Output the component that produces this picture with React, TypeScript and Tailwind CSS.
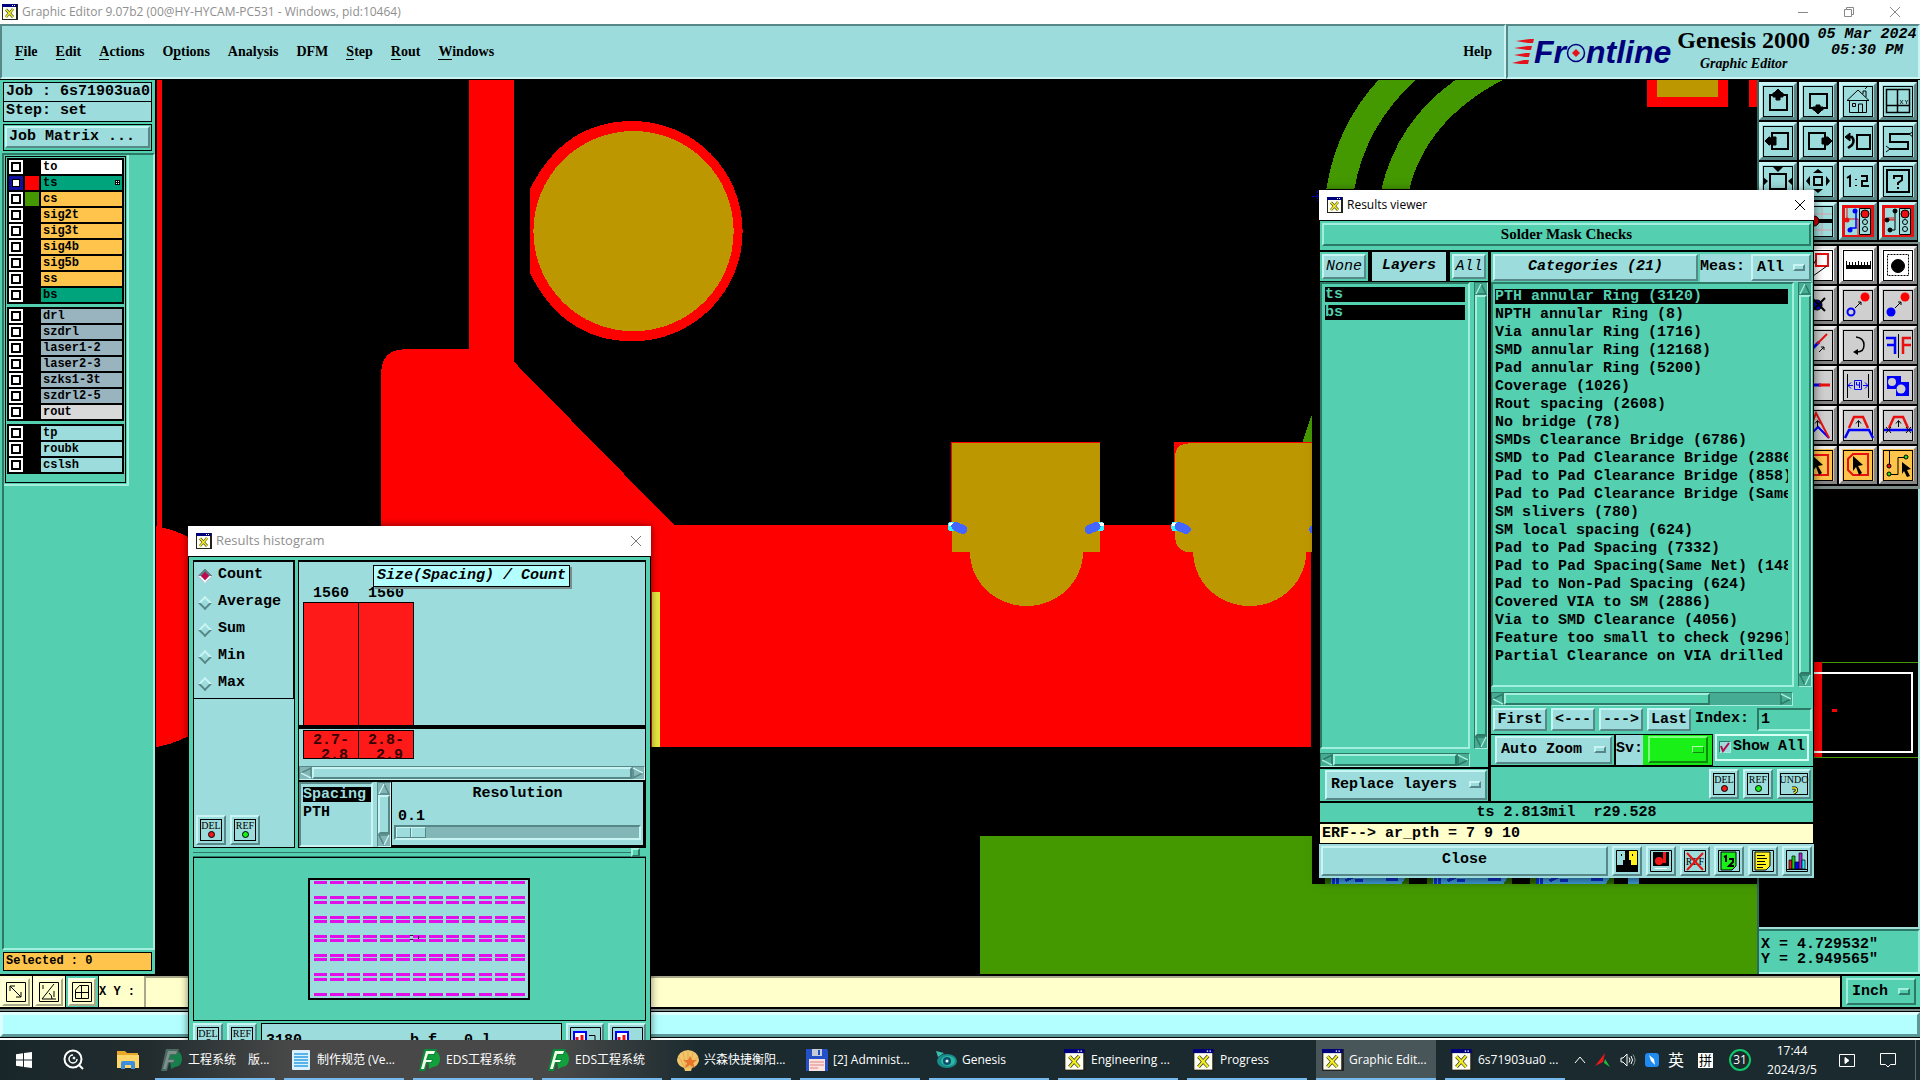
import type { ReactNode } from "react";
import clsx from "clsx";

const mono = "font-['Liberation_Mono',monospace] text-[15px] font-bold";
const raised = "border-2 border-t-[#c9f4f4] border-l-[#c9f4f4] border-r-[#578787] border-b-[#578787] bg-[#9cdcdc]";
const raisedGreen = "border-2 border-t-[#a2efdd] border-l-[#a2efdd] border-r-[#2c7a66] border-b-[#2c7a66] bg-[#54cfb0]";
const sunkGreen = "border-2 border-t-[#2c7a66] border-l-[#2c7a66] border-r-[#a2efdd] border-b-[#a2efdd] bg-[#54cfb0]";

const menus = [
  { label: "File", key: 0 },
  { label: "Edit", key: 0 },
  { label: "Actions", key: 0 },
  { label: "Options", key: 1 },
  { label: "Analysis", key: -1 },
  { label: "DFM", key: -1 },
  { label: "Step", key: 0 },
  { label: "Rout", key: 0 },
  { label: "Windows", key: 0 },
];

const layerGroups = [
  [
    { name: "to", bg: "bg-white", swatch: "bg-black" },
    { name: "ts", bg: "bg-[#00a47c]", swatch: "bg-[#ff0000]", active: true },
    { name: "cs", bg: "bg-[#ffc44c]", swatch: "bg-[#449900]" },
    { name: "sig2t", bg: "bg-[#ffc44c]", swatch: "bg-black" },
    { name: "sig3t", bg: "bg-[#ffc44c]", swatch: "bg-black" },
    { name: "sig4b", bg: "bg-[#ffc44c]", swatch: "bg-black" },
    { name: "sig5b", bg: "bg-[#ffc44c]", swatch: "bg-black" },
    { name: "ss", bg: "bg-[#ffc44c]", swatch: "bg-black" },
    { name: "bs", bg: "bg-[#00a47c]", swatch: "bg-black" },
  ],
  [
    { name: "drl", bg: "bg-[#9ab4bf]", swatch: "bg-black" },
    { name: "szdrl", bg: "bg-[#9ab4bf]", swatch: "bg-black" },
    { name: "laser1-2", bg: "bg-[#9ab4bf]", swatch: "bg-black" },
    { name: "laser2-3", bg: "bg-[#9ab4bf]", swatch: "bg-black" },
    { name: "szks1-3t", bg: "bg-[#9ab4bf]", swatch: "bg-black" },
    { name: "szdrl2-5", bg: "bg-[#9ab4bf]", swatch: "bg-black" },
    { name: "rout", bg: "bg-[#d9d9d9]", swatch: "bg-black" },
  ],
  [
    { name: "tp", bg: "bg-[#9cdcdc]", swatch: "bg-black" },
    { name: "roubk", bg: "bg-[#9cdcdc]", swatch: "bg-black" },
    { name: "cslsh", bg: "bg-[#9cdcdc]", swatch: "bg-black" },
  ],
];

const categories = [
  "PTH annular Ring (3120)",
  "NPTH annular Ring (8)",
  "Via annular Ring (1716)",
  "SMD annular Ring (12168)",
  "Pad annular Ring (5200)",
  "Coverage (1026)",
  "Rout spacing (2608)",
  "No bridge (78)",
  "SMDs Clearance Bridge (6786)",
  "SMD to Pad Clearance Bridge (2886)",
  "Pad to Pad Clearance Bridge (858)",
  "Pad to Pad Clearance Bridge (Same",
  "SM slivers (780)",
  "SM local spacing (624)",
  "Pad to Pad Spacing (7332)",
  "Pad to Pad Spacing(Same Net) (148",
  "Pad to Non-Pad Spacing (624)",
  "Covered VIA to SM (2886)",
  "Via to SMD Clearance (4056)",
  "Feature too small to check (9296)",
  "Partial Clearance on VIA drilled",
];

function XIcon({ className = "size-4" }: { className?: string }) {
  return (
    <svg viewBox="0 0 16 16" className={className} aria-hidden="true">
      <rect width="16" height="16" fill="#222" />
      <rect x="1" y="1" width="13" height="14" fill="#fffff0" />
      <rect width="15" height="3" fill="#00007c" />
      <path d="M10 1.500h1M12 1.500h1" stroke="#fff" />
      <path d="M4 5.500L11 13M11 5L4 13" stroke="#333" strokeWidth="2.600" />
      <path d="M4 5.500L11 13M11 5L4 13" stroke="#f2ee1c" strokeWidth="1.600" />
    </svg>
  );
}

function CloseGlyph({ color = "#000" }: { color?: string }) {
  return (
    <svg viewBox="0 0 12 12" className="size-3" stroke={color} fill="none" aria-hidden="true">
      <path d="M1 1l10 10M11 1L1 11" />
    </svg>
  );
}

function TitleBar() {
  return (
    <header className="flex h-6 shrink-0 items-center bg-white px-0.5 font-['Open_Sans',sans-serif] text-xs text-[#8f8f8f]">
      <XIcon />
      <h1 className="ml-1 flex-1">Graphic Editor 9.07b2 (00@HY-HYCAM-PC531 - Windows, pid:10464)</h1>
      <button aria-label="Minimize" className="flex w-[46px] justify-center">
        <svg viewBox="0 0 12 12" className="size-3" stroke="#888"><path d="M1 6.500h10" /></svg>
      </button>
      <button aria-label="Restore" className="flex w-[46px] justify-center">
        <svg viewBox="0 0 12 12" className="size-3" stroke="#888" fill="none">
          <path d="M1.500 3.500h7v7h-7zM3.500 3V1.500h7v7H9" />
        </svg>
      </button>
      <button aria-label="Close" className="flex w-[46px] justify-center"><CloseGlyph color="#888" /></button>
    </header>
  );
}

function MenuBar() {
  return (
    <div className="flex h-[56px] shrink-0 border-b border-black bg-[#9cdcdc] font-['Liberation_Serif',serif] text-sm font-bold">
      <nav className="flex flex-1 items-center gap-[18px] border-2 border-[#c9f4f4] border-t-[#578787] border-l-[#578787] pr-2 pl-[13px]">
        {menus.map((m) => (
          <button key={m.label} className="leading-4">
            {m.key < 0 ? (
              m.label
            ) : (
              <>
                {m.label.slice(0, m.key)}
                <span className="border-b border-black">{m.label[m.key]}</span>
                {m.label.slice(m.key + 1)}
              </>
            )}
          </button>
        ))}
        <button className="mr-1 ml-auto">Help</button>
      </nav>
      <div className="flex w-[414px] items-center border-2 border-[#c9f4f4] border-t-[#578787] border-l-[#578787] pl-1">
        <div className="flex items-center">
          <svg viewBox="0 0 22 28" className="h-7 w-[22px]" fill="#e3121c" aria-hidden="true">
            <path d="M4 3l14-2h4l-1 4h-5zM2 10l14-2h4l-1 4h-4zM2 17l12-2h4l-1 4h-4zM0 25l12-3h5l-1 4H8z" />
          </svg>
          <div className="flex items-baseline font-['Liberation_Sans',sans-serif] text-[32px] leading-8 font-bold text-[#00007c] italic">
            Fr
            <svg viewBox="0 0 20 20" className="size-5" role="img" aria-label="o">
              <circle cx="10" cy="10" r="8.500" fill="none" stroke="#00007c" strokeWidth="1.500" />
              <path d="M10 6l4 4-4 4-4-4z" fill="#e3121c" />
            </svg>
            ntline
          </div>
        </div>
        <div className="flex flex-1 flex-col items-center leading-none">
          <span className="text-2xl leading-6">Genesis 2000</span>
          <span className="text-sm leading-6 italic">Graphic Editor</span>
        </div>
        <div className={clsx(mono, "w-[102px] self-start pt-px text-center leading-4 italic")}>
          <div>05 Mar 2024</div>
          <div>05:30 PM</div>
        </div>
      </div>
    </div>
  );
}

function LayerPanel() {
  return (
    <aside className="flex w-[156px] shrink-0 flex-col border-r border-black bg-[#54cfb0] pt-0.5">
      <div className={clsx(mono, "mx-[3px] flex flex-col")}>
        <div className="h-5 border border-black bg-[#9cdcdc] pl-0.5 leading-[18px]">Job : 6s71903ua0</div>
        <div className="h-5 border border-t-0 border-black bg-[#9cdcdc] pl-0.5 leading-[18px]">Step: set</div>
        <div className="mt-0.5 border border-black p-px">
          <button className={clsx(raised, "h-[22px] w-full pl-0.5 text-left leading-[18px]")}>Job Matrix ...</button>
        </div>
      </div>
      <div className={clsx(sunkGreen, "mt-0.5 ml-0.5 flex-1")}>
        <div className="w-[125px] border-r-2 border-b-2 border-[#a2efdd] p-px">
          <div className="flex flex-col gap-[3px] border border-black px-px pt-px pb-2">
            {layerGroups.map((group) => (
              <div key={group[0].name} className="flex flex-col gap-0.5 bg-black p-0.5">
                {group.map((layer) => (
                  <label key={layer.name} className="flex h-3.5 gap-0.5">
                    <input
                      type="checkbox"
                      defaultChecked={layer.name === "ts"}
                      className="size-3.5 appearance-none bg-white shadow-[inset_0_0_0_2px_#fff,inset_0_0_0_4px_#000] checked:shadow-[inset_0_0_0_3px_#10109c,inset_0_0_0_4px_#000]"
                    />
                    <span className={clsx("w-3.5", layer.swatch)} />
                    <span className={clsx("flex flex-1 items-center justify-between px-0.5 font-['Liberation_Mono',monospace] text-xs leading-3 font-bold", layer.bg)}>
                      {layer.name}
                      {"active" in layer && (
                        <svg viewBox="0 0 5 5" className="size-[5px]">
                          <rect width="5" height="5" />
                          <path d="M1 1h1v1H1zM3 1h1v1H3zM1 3h1v1H1zM3 3h1v1H3z" fill="#fff" />
                        </svg>
                      )}
                    </span>
                  </label>
                ))}
              </div>
            ))}
          </div>
        </div>
      </div>
      <div className="mx-[3px] mt-0.5 mb-[3px] h-[19px] border border-black bg-[#ffc44c] pl-0.5 font-['Liberation_Mono',monospace] text-xs leading-[17px] font-bold">
        Selected : 0
      </div>
    </aside>
  );
}

function BoardCanvas() {
  return (
    <main className="min-w-0 flex-1 bg-black">
      <svg viewBox="156 80 1601 893" preserveAspectRatio="xMinYMin slice" className="h-full w-full" shapeRendering="crispEdges" role="img" aria-label="Board layout">
        <g fill="#ff0000">
          <path d="M157 80h5v556h-5z" />
          <circle cx="137" cy="636" r="112" />
          <path d="M469 80h45v282l160 163h636v221H381V373q0-24 24-24h64z" />
          <path d="M530 188v86q34 67 102 67a110 110 0 0 0 0-220q-68 0-102 67z" />
          <path d="M950 442h149v100h-149zM1173 442h138v90h-138z" />
          <path d="M1645 80h81v27h-81zM1747 80h8v27h-8z" />
        </g>
        <path d="M651 591h8v155h-8z" fill="#e8e840" />
        <g fill="#449900">
          <path d="M1377 80h37q-50 46-61 109h-28q10-63 52-109zM1454 80h47q-76 40-93 109h-28q16-68 74-109z" />
          <path d="M1311 413v29h-10z" />
          <path d="M979 835h332v48h444v91H979z" />
        </g>
        <g fill="#bc9700">
          <circle cx="633" cy="231" r="100" />
          <path d="M951 443h148v108h-17a56 54 0 0 1-113 0h-18z" />
          <path d="M1188 443h123v108h-6a56 54 0 0 1-113 0h-8q-10-4-10-14v-80q0-14 14-14z" />
          <path d="M1655 80h61v17h-61z" />
        </g>
        <g strokeWidth="8" strokeLinecap="round">
          <path d="M951 525v2M1099 525v2M1174 525v2" stroke="#30f4ff" />
          <path d="M950 524h1M1100 524h1M1173 524h1" stroke="#fff" strokeWidth="4" />
          <path d="M955 526l7 3M1095 526l-7 3M1178 526l7 3" stroke="#4466ff" strokeWidth="9" />
        </g>
        <path d="M1308 529a4 4 0 0 1 3-4v8a4 4 0 0 1-3-4z" fill="#4466ff" />
        <path d="M1311 196h10M1316 191v10" stroke="#0000ff" strokeDasharray="2 1" />
        {[1330, 1432, 1534].map((x) => (
          <g key={x} transform={`translate(${x} 874)`}>
            <path d="M-6 0h84v9H-6z" fill="#2f6d00" />
            <path d="M0 0h76l-6 9H0z" fill="#42a4e4" />
            <path d="M2 1v8M6 2v7M10 2h10M14 6l8-4M24 6h8M55 5h12M62 2h10" stroke="#1030d8" strokeWidth="3" />
          </g>
        ))}
        <path d="M1626 874h11v9h-11z" fill="#42a4e4" />
      </svg>
    </main>
  );
}

// All tool drawings share a 38x38 box; the frame at 4.5 is drawn by ToolButton.
const navTools: { name: string; art: ReactNode; alert?: boolean }[] = [
  { name: "Pan up", art: <><path d="M11 13h17v15H11z" fill="none" strokeWidth="2" /><path d="M19 7l4 4h1v4h-3v3h-4v-3h-3v-4h1z" /></> },
  { name: "Pan down", art: <><path d="M11 12h17v14H11z" fill="none" strokeWidth="2" /><path d="M19 32l4-4h1v-3h-3v-2h-4v2h-3v3h1z" /></> },
  { name: "Home", art: <path d="M10.500 18v12.500h17V18M8 18.500L19 8l11 10.500zM13.500 21.500h3v3h-3zM19.500 30v-8h4v8M24 12V9h3v6M26 7l2-2" fill="none" /> },
  { name: "Coordinates", art: <><path d="M7.500 7.500h23v23h-23zM18.500 8v22M8 23.500h22" fill="none" strokeWidth="1.500" /><path d="M21 18l3 4m0-4l-3 4M26 18l1.500 2 1.500-2M27.500 20v2" fill="none" strokeWidth="0.700" /></> },
  { name: "Pan left", art: <><path d="M13 11h16v16H13z" fill="none" strokeWidth="2" /><path d="M6 19l4-4h1v1h3v-1h3v8h-3v-1h-3v1h-1z" /></> },
  { name: "Pan right", art: <><path d="M10 11h16v16H10z" fill="none" strokeWidth="2" /><path d="M33 19l-4-4h-2v1h-4v6h4v1h2z" /></> },
  { name: "Previous view", art: <><path d="M18 13h13v14H18z" fill="none" strokeWidth="2" /><path d="M9 15h4q3 4 0 8l-4 3" fill="none" strokeWidth="2.500" /><path d="M6 15l5-4v8z" /></> },
  { name: "Serpentine", art: <><path d="M31 12H11v8h18v7H10" fill="none" strokeWidth="2" /><path d="M30 12l4-2M30 12l4 3M11 27l-4-3M11 27l-4 3" fill="none" /></> },
  { name: "Zoom in", art: <><path d="M11 12h16v15H11z" fill="none" strokeWidth="2" /><path d="M14 5h10l-5 5zM4 15v9l5-5zM34 15v9l-5-5zM14 34h10l-5-4z" stroke="none" /></> },
  { name: "Zoom out", art: <><path d="M15 15h8v8h-8z" fill="none" strokeWidth="2" /><path d="M14 11h10l-5-4zM11 14v10l-4-5zM27 14v10l4-5zM14 27h10l-5 4z" stroke="none" /></> },
  { name: "Scale", art: <path d="M8 16l3-2v11M17 17v1M17 23v1M22 14h6v5h-5v5h7" fill="none" strokeWidth="2" /> },
  { name: "Help", art: <><path d="M8 8h22v22H8z" fill="none" strokeWidth="2" /><path d="M15 17v-3h8v4l-4 3v2M19 25v2" fill="none" strokeWidth="2" /></> },
  { name: "Snap", art: <path d="M8 19h22M19 8v22" /> },
  { name: "Grid point", art: <><path d="M11 5v28M23 5v28M5 12h28M5 28h28" stroke="#dba0a8" /><path d="M19 19h14" strokeWidth="4" /><circle cx="15" cy="19" r="5" fill="#c00" /></> },
  {
    name: "Net control",
    alert: true,
    art: <><path d="M8 5v12h11v17" fill="none" stroke="#e81010" /><path d="M17 8v18h-6" fill="none" stroke="#0000ff" strokeWidth="1.500" /><circle cx="8" cy="18" r="2.500" fill="#e81010" stroke="none" /><circle cx="16" cy="9" r="2.500" fill="#0000ff" stroke="none" /><circle cx="11" cy="28" r="2.500" fill="#0000ff" stroke="none" /><path d="M20.500 6.500h11v26h-11z" fill="none" /><circle cx="26" cy="12" r="4" fill="#e81010" /><circle cx="26" cy="20" r="2.500" fill="none" /><circle cx="26" cy="27" r="2.500" fill="none" /></>,
  },
  {
    name: "Net trace",
    alert: true,
    art: <><path d="M16 9v19h-5" fill="none" /><path d="M10 18v-3m2 3v-3m2 3v-3M8 18h8" stroke="#e81010" fill="none" /><circle cx="8" cy="18" r="2" /><circle cx="16" cy="9" r="2" /><circle cx="11" cy="28" r="2" /><path d="M20.500 6.500h11v26h-11z" fill="none" /><circle cx="26" cy="12" r="4" fill="#e81010" /><circle cx="26" cy="20" r="2.500" fill="none" /><circle cx="26" cy="27" r="2.500" fill="none" /></>,
  },
];

const arrowCursor = "M14 10l10 9-5 1 4 7-3 2-3-8-3 4z";

const editTools: { name: string; art: ReactNode; tone: string }[] = [
  { name: "Select area", tone: "bg-white", art: <path d="M9 9h20v20H9z" fill="none" /> },
  { name: "Zoom area", tone: "bg-white", art: <><path d="M17 8h12v12H17z" fill="none" stroke="#e81010" strokeWidth="2" /><path d="M14 30l14-10M17 14L7 30" fill="none" /></> },
  { name: "Measure", tone: "bg-white", art: <><path d="M7.500 20v-5M10.500 20v-4M13.500 20v-4M16.500 20v-4M19.500 20v-5M22.500 20v-4M25.500 20v-4M28.500 20v-4M31.500 20v-5" /><path d="M7 19h25v4H7z" stroke="none" /></> },
  { name: "Highlight", tone: "bg-white", art: <><path d="M8.500 8.500h21v21h-21z" fill="none" strokeDasharray="2 1" /><circle cx="19" cy="20" r="6.500" /></> },
  { name: "Add feature", tone: "bg-[#cfcfcf]", art: <circle cx="19" cy="19" r="6" fill="#0000e8" /> },
  { name: "Delete", tone: "bg-[#cfcfcf]", art: <><circle cx="18" cy="19" r="5" fill="#0000c8" /><path d="M13 12l13 13M26 12L13 25" strokeWidth="2" /></> },
  { name: "Copy", tone: "bg-[#cfcfcf]", art: <><circle cx="12" cy="26" r="3.500" fill="none" stroke="#0000ff" strokeWidth="2" /><circle cx="26" cy="11" r="4.500" fill="#ff0000" stroke="none" /><path d="M16 22l6-6M19 16h3v3" fill="none" /></> },
  { name: "Move", tone: "bg-[#cfcfcf]", art: <><circle cx="12" cy="26" r="4.500" fill="#0000ff" stroke="none" /><circle cx="26" cy="11" r="4.500" fill="#ff0000" stroke="none" /><path d="M16 22l6-6M19 16h3v3" fill="none" /></> },
  { name: "Stretch", tone: "bg-[#cfcfcf]", art: <path d="M9 28L28 9" stroke="#0000ff" strokeWidth="3" /> },
  { name: "Rotate line", tone: "bg-[#cfcfcf]", art: <><path d="M14 22l6-6" stroke="#0000ff" strokeWidth="3" /><path d="M18 18l10-10" stroke="#e81010" strokeWidth="2" /><path d="M20 26l5-5M22 21h3v3" fill="none" /></> },
  { name: "Rotate", tone: "bg-[#cfcfcf]", art: <><path d="M17 11q8 1 8 8t-7 7" fill="none" strokeWidth="1.500" /><path d="M14 26l5-3v6z" stroke="none" /></> },
  { name: "Mirror", tone: "bg-[#cfcfcf]", art: <><path d="M7 12h9v16M16 19H8" fill="none" stroke="#0000ff" strokeWidth="2.500" /><path d="M32 12h-8v16M24 19h8" fill="none" stroke="#e81010" strokeWidth="2.500" /><path d="M19.500 8v24" /></> },
  { name: "Break", tone: "bg-[#cfcfcf]", art: <path d="M8 19h22" stroke="#0000ff" strokeWidth="3" /> },
  { name: "Extend", tone: "bg-[#cfcfcf]", art: <><path d="M10 19h12" stroke="#0000ff" strokeWidth="3" /><path d="M20 19h11" stroke="#e81010" strokeWidth="3" /></> },
  { name: "Resize", tone: "bg-[#cfcfcf]", art: <><path d="M8.500 8v24M29.500 8v24" /><path d="M15.500 14.500h7v9h-7zM17.500 16v3h3v3M20.500 16v6M9 19.500h5M9 19.500l3-3M9 19.500l3 3M29 19.500h-5M29 19.500l-3-3M29 19.500l-3 3" fill="none" stroke="#0000ff" /></> },
  { name: "Contour", tone: "bg-[#cfcfcf]", art: <><path d="M8 10h14v6h8v14H17v-7H8z" fill="#0000ff" stroke="none" /><circle cx="13" cy="16" r="4" fill="#cfcfcf" stroke="none" /><circle cx="22" cy="23" r="4.500" fill="#cfcfcf" stroke="none" /></> },
  { name: "Arc", tone: "bg-[#cfcfcf]", art: <path d="M8 30L19 9l11 21" fill="none" stroke="#0000ff" strokeWidth="2" /> },
  { name: "Peak", tone: "bg-[#cfcfcf]", art: <><path d="M10 30l9-9 11 11" fill="none" stroke="#0000ff" strokeWidth="2" /><path d="M10 26l7-19 13 25" fill="none" stroke="#e81010" strokeWidth="2" /><path d="M18.500 21v-6M16 17.500l2.500-3 2.500 3" fill="none" /></> },
  { name: "Trapezoid", tone: "bg-[#cfcfcf]", art: <><path d="M10 22l5-11h9l5 11" fill="none" stroke="#e81010" strokeWidth="2.500" /><path d="M6 32l4-8h20l4 8" fill="none" stroke="#0000ff" strokeWidth="2.500" /><path d="M19.500 21v-6M17 17.500l2.500-3 2.500 3" fill="none" /></> },
  { name: "Trapezoid flat", tone: "bg-[#cfcfcf]", art: <><path d="M10 22l5-11h9l5 11" fill="none" stroke="#e81010" strokeWidth="2.500" /><path d="M5 24h29" stroke="#0000ff" strokeWidth="2.500" /><path d="M19.500 21v-6M17 17.500l2.500-3 2.500 3M7 21l5 6M12 21l-5 6M27 21l5 6M32 21l-5 6" fill="none" /></> },
  { name: "Pick", tone: "bg-[#ffc44c]", art: <path d={arrowCursor} /> },
  { name: "Pick window", tone: "bg-[#ffc44c]", art: <><path d="M9 9h20v20H9z" fill="none" stroke="#e81010" strokeWidth="2" /><path d={arrowCursor} stroke="none" /></> },
  { name: "Pick polygon", tone: "bg-[#ffc44c]", art: <><path d="M14 8h15v21H14l-5-5V13z" fill="none" stroke="#e81010" strokeWidth="2" /><path d={arrowCursor} stroke="none" /></> },
  { name: "Pick net", tone: "bg-[#ffc44c]", art: <><path d="M10.500 5v14M10 28.500h9v-17h8" fill="none" /><circle cx="10" cy="20" r="2" fill="#e81010" /><circle cx="10" cy="28" r="2" fill="#18e818" /><circle cx="27" cy="11" r="2" fill="#18e818" /><path d="M23 16l9 7-4 1 3 6-3 1-3-6-2 3z" stroke="none" /></> },
];

function ToolButton({ name, art, tone, alert }: { name: string; art: ReactNode; tone: string; alert?: boolean }) {
  return (
    <button aria-label={name} title={name} className={clsx("h-[38px] w-[38px] border-[3px]", tone)}>
      <svg viewBox="3 3 32 32" className="size-8" stroke="#000" aria-hidden="true">
        <rect x="4.500" y="4.500" width="29" height="30" fill="none" stroke={alert ? "#e81010" : "#000"} strokeWidth={alert ? 3 : 1} />
        {art}
      </svg>
    </button>
  );
}

function ToolPanel() {
  return (
    <aside className="flex w-[163px] shrink-0 flex-col border-l-2 border-[#2c6a60] bg-black">
      <div className="grid grid-cols-[repeat(4,38px)] gap-0.5 border-r-2 border-[#a2dfd8] py-0.5">
        {navTools.map((t) => (
          <ToolButton key={t.name} {...t} tone="bg-[#9cdcdc] border-t-[#c9f4f4] border-l-[#c9f4f4] border-r-[#578787] border-b-[#578787]" />
        ))}
      </div>
      <div className="grid grid-cols-[repeat(4,38px)] gap-0.5 border-t-2 border-r-2 border-b-[3px] border-[#7c8a88] py-0.5">
        {editTools.map((t) => (
          <ToolButton key={t.name} {...t} tone={clsx("border-t-[#ececec] border-l-[#ececec] border-r-[#858585] border-b-[#858585]", t.tone)} />
        ))}
      </div>
      <div className="min-h-0 flex-1 border-r-2 border-b-2 border-[#a2dfd8]">
        <svg viewBox="1759 488 158 440" preserveAspectRatio="xMinYMin meet" className="h-full w-full" shapeRendering="crispEdges" aria-label="Board overview">
          <path d="M1759 662.500h160M1759 757.500h160" stroke="#449900" />
          <path d="M1759 662h63v95h-63z" fill="#ff0000" />
          <path d="M1780 673h133v79h-133" fill="none" stroke="#fff" strokeWidth="2" />
          <path d="M1832 709h5v3h-5z" fill="#ff0000" />
        </svg>
      </div>
      <div className={clsx(mono, "h-[45px] border-t-2 border-r-2 border-b-2 border-t-[#2c7a66] border-r-[#a2efdd] border-b-[#a2efdd] bg-[#54cfb0] pt-1.5 pl-0.5")}>
        <div className="leading-[15px]">X = 4.729532"</div>
        <div className="leading-[15px]">Y = 2.949565"</div>
      </div>
    </aside>
  );
}

const snapModes = [
  { name: "Relative", d: "M9 9l11 11M9 14V9h5M20 15v5h-5" },
  { name: "Polar", d: "M8 22l12-15M8 22h14M15 16q3 2 3 6M9 8v4M20 14v6" },
  { name: "Grid", d: "M8.500 13l4-4.500h9v13h-13zM14.500 8v14M8 15.500h14" },
];

function StatusBars() {
  return (
    <footer className="shrink-0 bg-white">
      <div className="flex h-[35px] border-y-2 border-black bg-[#ffffcc]">
        {snapModes.map((m) => (
          <div key={m.name} className={clsx("flex w-[33px] items-center justify-center border-r border-black", m.name === "Grid" && "bg-[#54cfb0]")}>
            <button aria-label={m.name} className="border-2 border-t-[#ffffec] border-l-[#ffffec] border-r-[#a8a88a] border-b-[#a8a88a] bg-[#ffffcc]">
              <svg viewBox="3 3 24 24" className="size-6" fill="none" stroke="#000" aria-hidden="true">
                <path d="M5.500 5.500h19v19h-19z" />
                <path d={m.d} />
              </svg>
            </button>
          </div>
        ))}
        <label htmlFor="xy" className="w-[45px] bg-[#ffffcc] font-['Liberation_Mono',monospace] text-xs leading-8 font-bold">X Y :</label>
        <input id="xy" className="min-w-0 flex-1 border-t-2 border-l-2 border-[#a8a88a] bg-[#ffffcc] px-1 outline-none" />
        <div className="border-l-2 border-black bg-[#54cfb0] px-1 py-0.5">
          <OptionMenu label="Units" value="Inch" className={clsx(raisedGreen, "h-[27px] w-[70px]")} marker={raisedGreen} />
        </div>
      </div>
      <div className="border-y-2 border-t-[#7f8c8c] border-b-white bg-black py-px">
        <div className="h-[25px] border-[3px] border-t-[#dcffff] border-l-[#dcffff] border-r-[#5d9696] border-b-[#5d9696] bg-[#b3ffff]" />
      </div>
    </footer>
  );
}

function OptionMenu({ label, value, className, marker = raised }: { label: string; value: string; className?: string; marker?: string }) {
  return (
    <span className={clsx("relative flex items-center", className)}>
      <select aria-label={label} className={clsx(mono, "w-full appearance-none bg-transparent pl-1 leading-[18px] outline-none")}>
        <option>{value}</option>
      </select>
      <span className={clsx("pointer-events-none absolute right-1 h-[7px] w-3 border", marker)} />
    </span>
  );
}

function Scrollbar({ vertical, green, className, size = "w-full" }: { vertical?: boolean; green?: boolean; className?: string; size?: string }) {
  const light = green ? "#a2efdd" : "#c9f4f4";
  const dark = green ? "#2c7a66" : "#578787";
  const arrow = (dir: "up" | "down" | "left" | "right") => {
    const turn = { up: "", right: "rotate-90", down: "rotate-180", left: "-rotate-90" }[dir];
    return (
      <svg viewBox="0 0 12 12" className={clsx("size-3 shrink-0", turn)} fill="none" aria-hidden="true">
        <path d="M6 1L1 11h10z" stroke={dark} strokeWidth="1.500" />
        <path d="M6 1L1 11" stroke={light} strokeWidth="1.500" />
      </svg>
    );
  };
  return (
    <div
      className={clsx(
        "flex border",
        vertical ? "w-[14px] flex-col" : "h-[14px]",
        green ? "border-t-[#2c7a66] border-l-[#2c7a66] border-r-[#a2efdd] border-b-[#a2efdd] bg-[#46ab93]" : "border-t-[#578787] border-l-[#578787] border-r-[#c9f4f4] border-b-[#c9f4f4] bg-[#83b7b7]",
        className,
      )}
    >
      {arrow(vertical ? "up" : "left")}
      <div className="flex min-h-0 min-w-0 flex-1">
        <div className={clsx(green ? raisedGreen : raised, vertical ? "h-full w-full" : size)} />
      </div>
      {arrow(vertical ? "down" : "right")}
    </div>
  );
}

function BadgeButton({ text, dot, wide }: { text: string; dot?: "red" | "lime"; wide?: boolean }) {
  return (
    <button className={clsx(raised, "flex h-[30px] items-center justify-center", wide ? "w-[34px]" : "w-[30px]")}>
      <span className={clsx("flex h-[22px] flex-col items-center border border-black font-['Liberation_Serif',serif] text-[10px] font-normal", wide ? "w-[28px]" : "w-[22px]")}>
        <span className="leading-[11px]">{text}</span>
        {dot ? (
          <span className={clsx("size-[7px] rounded-full border border-black", dot === "red" ? "bg-[#f01818]" : "bg-[#18f018]")} />
        ) : (
          <svg viewBox="0 0 9 9" className="size-[9px]" fill="none" aria-hidden="true">
            <path d="M2 3h3q2.500 1 1 3.500L4 8" stroke="#000" strokeWidth="3" />
            <path d="M2 3h3q2.500 1 1 3.500L4 8" stroke="#f4f020" strokeWidth="1.500" />
          </svg>
        )}
      </span>
    </button>
  );
}

const stats = ["Count", "Average", "Sum", "Min", "Max"];

const bins = [
  { from: "2.7-", to: "2.8", count: 1560 },
  { from: "2.8-", to: "2.9", count: 1560 },
];

function HistogramWindow() {
  return (
    <section className="absolute top-[526px] left-[188px] flex h-[540px] w-[463px] flex-col bg-[#54cfb0] shadow-[0_0_8px_rgba(0,0,0,0.5)]">
      <div className="flex h-[30px] shrink-0 items-center bg-white px-2 font-['Open_Sans',sans-serif] text-xs text-[#8f8f8f]">
        <XIcon />
        <h2 className="ml-1 flex-1 text-[13px]">Results histogram</h2>
        <button aria-label="Close histogram" className="mr-px"><CloseGlyph color="#777" /></button>
      </div>
      <div className="border border-black px-1 pt-[3px]">
        <div className={clsx(mono, "flex h-[288px] gap-[3px]")}>
          <div className="flex w-[102px] flex-col justify-between border border-black bg-[#9cdcdc]">
            <fieldset className="flex h-[138px] flex-col border-t border-r border-b border-black pl-1.5">
              {stats.map((s) => (
                <label key={s} className="flex h-[27px] items-center gap-2">
                  <input
                    type="radio"
                    name="stat"
                    defaultChecked={s === "Count"}
                    className="size-2.5 rotate-45 appearance-none border-2 border-t-[#c9f4f4] border-l-[#c9f4f4] border-r-[#578787] border-b-[#578787] checked:border-t-[#578787] checked:border-l-[#578787] checked:border-r-[#e8ffff] checked:border-b-[#e8ffff] checked:bg-[#c00850]"
                  />
                  {s}
                </label>
              ))}
            </fieldset>
            <div className="flex gap-1 p-0.5">
              <BadgeButton text="DEL" dot="red" />
              <BadgeButton text="REF" dot="lime" />
            </div>
          </div>
          <div className="flex flex-1 flex-col border border-t-2 border-black bg-[#9cdcdc]">
            <div className="relative flex h-[167px] items-end border-b-4 border-black pl-1">
              <div className="absolute top-[3px] left-[74px] border border-black bg-[#b3ffff] px-[3px] leading-5 italic shadow-[2px_2px_0_#7b8c8c]">
                Size(Spacing) / Count
              </div>
              {bins.map((b) => (
                <div key={b.from} className="-mr-px w-14 text-center">
                  <div className="leading-4">{b.count}</div>
                  <div className="h-[123px] border border-b-0 border-black bg-[#ff1a1a]" />
                </div>
              ))}
            </div>
            <div className="flex h-[37px] pt-px pl-1">
              {bins.map((b) => (
                <div key={b.from} className="-mr-px h-[29px] w-14 border border-black bg-[#ff1a1a] text-center leading-[15px] text-[#330000]">
                  <div className="pt-0.5">{b.from}</div>
                  <div className="pl-[17px] text-left">{b.to}</div>
                </div>
              ))}
            </div>
            <Scrollbar />
            <div className="flex min-h-0 flex-1 gap-1 border-t-2 border-black">
              <ul className="w-[74px] border-2 border-t-[#578787] border-l-[#578787] border-r-[#c9f4f4] border-b-[#c9f4f4] py-[3px] pl-0.5">
                <li className="mb-[3px] h-[15px] bg-black leading-[15px] text-[#9cdcdc]">Spacing</li>
                <li className="leading-[15px]">PTH</li>
              </ul>
              <div className="flex"><Scrollbar vertical /></div>
              <div className="-ml-1 flex flex-1 flex-col border-r-2 border-b-2 border-l border-black px-0.5">
                <label htmlFor="resolution" className="pt-0.5 text-center leading-5">Resolution</label>
                <output htmlFor="resolution" className="pt-[5px] pl-1 leading-4">0.1</output>
                <input
                  id="resolution"
                  type="range"
                  min="0"
                  max="10"
                  defaultValue="0"
                  className="h-[15px] w-full appearance-none border-2 border-t-[#578787] border-l-[#578787] border-r-[#c9f4f4] border-b-[#c9f4f4] bg-[#83b7b7] [&::-webkit-slider-thumb]:h-[11px] [&::-webkit-slider-thumb]:w-[30px] [&::-webkit-slider-thumb]:appearance-none [&::-webkit-slider-thumb]:border [&::-webkit-slider-thumb]:border-t-[#c9f4f4] [&::-webkit-slider-thumb]:border-l-[#c9f4f4] [&::-webkit-slider-thumb]:border-r-[#578787] [&::-webkit-slider-thumb]:border-b-[#578787] [&::-webkit-slider-thumb]:bg-[linear-gradient(90deg,#9cdcdc_46%,#578787_46%,#578787_50%,#c9f4f4_50%,#c9f4f4_54%,#9cdcdc_54%)]"
                />
              </div>
            </div>
          </div>
        </div>
        <div className="flex h-[9px] items-center justify-end">
          <div className="h-px flex-1 bg-[#2c7a66]" />
          <div className={clsx(raisedGreen, "mr-1.5 size-[9px] border")} />
        </div>
        <div className="flex h-[164px] items-center justify-center border border-black shadow-[0_-1px_0_#2c7a66]">
          <svg viewBox="0 0 222 122" className="mr-0.5 h-[122px] w-[222px]" shapeRendering="crispEdges" role="img" aria-label="Results map">
            <rect x="1" y="1" width="220" height="120" fill="#9cdcdc" stroke="#000" strokeWidth="2" />
            <path
              d="M6 4.500h211M6 19.500h211M6 24.500h211M6 39.500h211M6 43.500h211M6 58.500h211M6 62.500h211M6 77.500h211M6 81.500h211M6 96.500h211M6 101.500h211M6 116.500h211"
              stroke="#e010e8"
              strokeWidth="3"
              strokeDasharray="13.400 3.050"
            />
            <path d="M102 57h3M102 61h3M110 58v3" stroke="#222" fill="none" />
          </svg>
        </div>
        <div className={clsx(mono, "flex gap-1 pt-0.5")}>
          <BadgeButton text="DEL" dot="red" />
          <BadgeButton text="REF" dot="lime" />
          <div className="h-8 flex-1 border border-black bg-[#9cdcdc] pt-2 pl-1 leading-[18px] whitespace-pre">3180            b f   0 l</div>
          {["Copy window", "Print window"].map((name) => (
            <button key={name} aria-label={name} className={clsx(raised, "flex h-[30px] w-[38px] justify-center")}>
              <svg viewBox="0 0 31 24" className="mt-0.5 h-6 w-[31px]" fill="none">
                <path d="M.5.500h30v23H.5z" stroke="#000" />
                <path d="M4 5h12v15H4z" fill="#fff" stroke="#0000ff" strokeWidth="2" />
                <path d="M7 10v8M12 8v10M7 16h6" stroke="#e81010" strokeWidth="3" />
                {name === "Copy window" && <path d="M19 8.500h6V18" stroke="#000" />}
              </svg>
            </button>
          ))}
        </div>
      </div>
    </section>
  );
}

const viewerTools: { name: string; art: ReactNode }[] = [
  { name: "Compare", art: <><path d="M0 0h11v15H0z" fill="#9cdcdc" /><path d="M11 0h11v15H11z" fill="#fff020" /><path d="M9 0h4v10h2v5h7v7H0v-7h7v-5h2z" fill="#000" /><path d="M5 4h1v2H5zM16 4h1v2h-1z" fill="#000" /><path d="M.5.5h21v21H.5z" fill="none" stroke="#000" /></> },
  { name: "Snapshot", art: <><path d="M.5.5h21v21H.5z" fill="#9cdcdc" stroke="#000" /><path d="M3 2h16v14H3z" fill="#000" /><circle cx="9" cy="11" r="4" fill="#f01818" /><path d="M13 2h3v11h-3z" fill="#f01818" /><path d="M5 18.500h12" stroke="#fff" /></> },
  { name: "Hide references", art: <><path d="M.5.5h21v21H.5z" fill="#9cdcdc" stroke="#000" /><text x="11" y="15" fontSize="10" textAnchor="middle" fontFamily="Liberation Serif, serif" fontWeight="400">REF</text><path d="M3 3l16 17M19 3L3 20" stroke="#e81010" strokeWidth="2" /></> },
  { name: "Numbered list", art: <><path d="M.5.5h21v21H.5z" fill="#9cdcdc" stroke="#000" /><path d="M3 2h15v14l-4 4H3z" fill="#18f018" stroke="#000" /><path d="M6 7l2-1v6M11 9h4v3l-4 4h5" fill="none" stroke="#000" strokeWidth="2" /></> },
  { name: "Report", art: <><path d="M.5.5h21v21H.5z" fill="#9cdcdc" stroke="#000" /><path d="M3 2h15v14l-4 4H3z" fill="#fff020" stroke="#000" /><path d="M5 5.500h8M5 8.500h10M5 11.500h8M5 14.500h9M5 17.500h6" stroke="#000" /></> },
  { name: "Histogram", art: <><path d="M.5.5h21v21H.5z" fill="#9cdcdc" stroke="#000" /><g stroke="#000" strokeWidth="0.700"><path d="M3 10h3v9H3z" fill="#f01818" /><path d="M6 6h3v13H6z" fill="#18d018" /><path d="M9 12h4v7H9z" fill="#0000ff" /><path d="M13 3h3v16h-3z" fill="#b020d0" /><path d="M16 10h3v9h-3z" fill="#20e8ff" /></g><path d="M1 19.500h20" stroke="#000" /></> },
];

function ResultsWindow() {
  return (
    <section className={clsx(mono, "absolute top-[190px] right-[106px] flex w-[495px] flex-col bg-black px-px shadow-[0_2px_10px_rgba(0,0,0,0.6)]")}>
      <div className="-mx-px flex h-[30px] items-center bg-white px-2 font-['Open_Sans',sans-serif] text-xs font-normal">
        <XIcon />
        <h2 className="ml-1 flex-1">Results viewer</h2>
        <button aria-label="Close viewer"><CloseGlyph /></button>
      </div>
      <div className="mt-px bg-[#54cfb0] p-0.5">
        <button className={clsx(raisedGreen, "h-[23px] w-full font-['Liberation_Serif',serif] text-[15px] leading-[19px]")}>Solder Mask Checks</button>
      </div>
      <div className="mt-0.5 flex h-[549px] gap-[3px]">
        <div className="flex w-[168px] flex-col">
          <div className="flex h-[29px] gap-1 italic">
            <div className="w-[48px] bg-[#54cfb0] p-0.5"><button className={clsx(raised, "h-[25px] w-full font-normal italic")}>None</button></div>
            <div className="flex flex-1 items-center justify-center bg-[#9cdcdc]">Layers</div>
            <div className="w-[38px] bg-[#54cfb0] p-0.5"><button className={clsx(raised, "h-[25px] w-full font-normal italic")}>All</button></div>
          </div>
          <div className="mt-px flex flex-1 flex-col bg-[#54cfb0]">
            <div className="flex flex-1 gap-1">
              <ul className={clsx(sunkGreen, "flex flex-1 flex-col gap-[3px] p-[3px]")}>
                <li className="h-[15px] bg-black leading-[15px] text-[#54cfb0]">ts</li>
                <li className="h-[15px] bg-black leading-[15px] text-[#54cfb0]">bs</li>
              </ul>
              <Scrollbar vertical green />
            </div>
            <div className="mt-1 mr-[18px]"><Scrollbar green /></div>
          </div>
          <div className="mt-0.5 bg-[#54cfb0] py-px pr-px pl-[5px]">
            <OptionMenu label="Layer display" value="Replace layers" className={clsx(raised, "h-[30px] w-full")} />
          </div>
        </div>
        <div className="flex min-w-0 flex-1 flex-col bg-[#54cfb0]">
          <div className="flex h-[30px] items-center px-0.5 pt-0.5">
            <button className={clsx(raised, "h-[27px] flex-1 italic")}>Categories (21)</button>
            <div className="ml-0.5 flex h-[28px] items-center bg-[#9cdcdc]">
              <span className="w-[51px]">Meas:</span>
              <OptionMenu label="Measurement" value="All" className={clsx(raised, "h-[27px] w-[60px]")} />
            </div>
          </div>
          <div className="flex h-[405px] gap-1 pr-px">
            <ul className={clsx(sunkGreen, "min-w-0 flex-1 overflow-hidden pt-[5px] pr-1 pl-0.5")}>
              {categories.map((c, i) => (
                <li key={c} className={clsx("mb-[3px] h-[15px] overflow-x-clip leading-[15px] whitespace-nowrap", i === 0 && "bg-black text-[#54cfb0]")}>
                  {c}
                </li>
              ))}
            </ul>
            <Scrollbar vertical green />
          </div>
          <div className="mt-[5px] mr-5"><Scrollbar green size="w-[206px]" /></div>
          <div className="flex h-7 items-center gap-1 pr-px pl-0.5">
            <button className={clsx(raised, "h-[23px] w-[54px] leading-[19px]")}>First</button>
            <button className={clsx(raised, "h-[23px] w-11 leading-[19px]")}>&lt;---</button>
            <button className={clsx(raised, "h-[23px] w-11 leading-[19px]")}>---&gt;</button>
            <button className={clsx(raised, "h-[23px] w-11 leading-[19px]")}>Last</button>
            <label htmlFor="index" className="w-[58px]">Index:</label>
            <input id="index" defaultValue="1" className={clsx(sunkGreen, "h-[23px] min-w-0 flex-1 pl-0.5 outline-none")} />
          </div>
          <div className="flex h-8 items-center">
            <div className="flex h-8 items-center border-y border-r-2 border-black pr-0.5 pl-1">
              <OptionMenu label="Zoom mode" value="Auto Zoom" className={clsx(raised, "h-[28px] w-[117px]")} />
            </div>
            <label htmlFor="severity" className="flex h-8 w-[27px] items-center border-y border-black bg-[#9cdcdc]">Sv:</label>
            <div className="relative flex h-8 w-[70px] items-center justify-center border-y border-r border-black bg-[#18e818]">
              <select id="severity" className="h-[27px] w-[60px] appearance-none border-2 border-t-[#80ff80] border-l-[#80ff80] border-r-[#0c8c0c] border-b-[#0c8c0c] bg-[#18f018]" />
              <span className="pointer-events-none absolute right-2 h-[7px] w-3 border border-t-[#b0ffb0] border-l-[#b0ffb0] border-r-[#0c8c0c] border-b-[#0c8c0c]" />
            </div>
            <label className="ml-0.5 flex h-[27px] w-[94px] items-center gap-0.5 self-start border-2 border-[#d8fff4] pl-0.5 whitespace-nowrap">
              <span className="relative flex size-3">
                <input type="checkbox" defaultChecked className="size-3 appearance-none border border-t-[#2c7a66] border-l-[#2c7a66] border-r-[#a2efdd] border-b-[#a2efdd] bg-[#9cdcdc]" />
                <svg viewBox="0 0 12 12" className="pointer-events-none absolute inset-0 size-3" fill="none" stroke="#b80848" strokeWidth="2"><path d="M2 5l2 5 6-8" /></svg>
              </span>
              Show All
            </label>
          </div>
          <div className="flex flex-1 items-center justify-end gap-1 border-t border-black pr-0.5">
            <BadgeButton text="DEL" dot="red" />
            <BadgeButton text="REF" dot="lime" />
            <BadgeButton text="UNDO" wide />
          </div>
        </div>
      </div>
      <div className="mt-0.5 h-[19px] bg-[#54cfb0] text-center leading-[19px] whitespace-pre">ts 2.813mil  r29.528</div>
      <div className="mt-0.5 h-[19px] bg-[#ffffcc] pl-0.5 leading-[19px]">ERF--&gt; ar_pth = 7 9 10</div>
      <div className="-mx-px mt-px flex items-center gap-1 bg-[#9cdcdc] p-0.5">
        <button className={clsx(raised, "h-[30px] flex-1")}>Close</button>
        {viewerTools.map((t) => (
          <button key={t.name} aria-label={t.name} className={clsx(raised, "flex h-[30px] w-[30px] items-center justify-center")}>
            <svg viewBox="0 0 22 22" className="size-[22px]" aria-hidden="true">{t.art}</svg>
          </button>
        ))}
      </div>
    </section>
  );
}

function FIcon({ dim }: { dim?: boolean }) {
  return (
    <svg viewBox="0 0 22 24" className="h-6 w-[22px]">
      <path d="M8 2h6q7 2 7 9t-7 8l-4 2z" fill={dim ? "#16804a" : "#12a03c"} />
      <path d="M5 1h13l-2 6h-6l-1 4h5l-1 4H8l-2 8H0z" fill={dim ? "#4a6a62" : "#0b8a3a"} />
      <path d="M7 3h9l-1 3H9l-2 6h6l-1 2H7l-2 7H2z" fill={dim ? "#7d928c" : "#f2ffe8"} />
    </svg>
  );
}

const tasks: { title: string; icon: ReactNode; active?: boolean }[] = [
  { title: "工程系统　版...", icon: <FIcon dim /> },
  {
    title: "制作规范 (Ve...",
    icon: <svg viewBox="0 0 20 22" className="h-[22px] w-5"><rect x="1" y="1" width="18" height="20" rx="1" fill="#d8f2ff" /><path d="M3 5h14M3 8h14M3 11h14M3 14h14M3 17h14" stroke="#2f9fe0" strokeWidth="1.500" /></svg>,
  },
  { title: "EDS工程系统", icon: <FIcon /> },
  { title: "EDS工程系统", icon: <FIcon /> },
  {
    title: "兴森快捷衡阳...",
    icon: <svg viewBox="0 0 24 22" className="h-[22px] w-6"><path d="M12 1q10 1 11 10 0 5-7 8l-1 3H9l-1-3Q1 16 1 11 2 2 12 1z" fill="#f3c56a" /><path d="M12 2v17M7 3l3 16M17 3l-3 16M3 8l6 11M21 8l-6 11" stroke="#d8a048" fill="none" strokeWidth="0.700" /><path d="M14 7l2 4h5l-4 3 2 5-5-3-5 3 2-5-4-3h5z" fill="#e8752a" /></svg>,
  },
  {
    title: "[2] Administ...",
    icon: <svg viewBox="0 0 24 24" className="size-6"><path d="M1 1h21l1 2v20H1z" fill="#2450c8" /><path d="M7 1h10v7H7z" fill="#c8ccd4" /><path d="M13 2h2v5h-2z" fill="#2450c8" /><path d="M4 11h16v12H4z" fill="#fbe4e0" /><path d="M5 14h14M5 17h14M5 20h8" stroke="#e08080" /></svg>,
  },
  {
    title: "Genesis",
    icon: <svg viewBox="0 0 24 22" className="h-[22px] w-6"><path d="M2 2l8 2-6 4z" fill="#35c0b0" /><ellipse cx="13" cy="12" rx="10" ry="7" fill="#178c8c" /><ellipse cx="14" cy="12" rx="7" ry="5" fill="#2bb8a0" /><circle cx="13" cy="12" r="4" fill="#0f4d70" /><circle cx="13" cy="12" r="1.500" fill="#d8fff0" /></svg>,
  },
  { title: "Engineering ...", icon: <XIcon className="size-[22px]" /> },
  { title: "Progress", icon: <XIcon className="size-[22px]" /> },
  { title: "Graphic Edit...", icon: <XIcon className="size-[22px]" />, active: true },
  { title: "6s71903ua0 ...", icon: <XIcon className="size-[22px]" /> },
];

function Taskbar() {
  return (
    <div className="relative z-10 flex h-10 shrink-0 items-stretch bg-[linear-gradient(90deg,#18262a_0,#222c2f_150px,#484848_290px,#484848_560px,#1a2a2e_700px)] font-['Open_Sans','Noto_Sans_CJK_SC',sans-serif] text-xs text-white">
      <button aria-label="Start" className="flex w-12 items-center justify-center">
        <svg viewBox="0 0 16 16" className="size-4" fill="#fff"><path d="M0 2.200L7 1.200v6.300H0zM8 1l8-1v7.500H8zM0 8.500h7v6.300l-7-1zM8 8.500h8V16l-8-1z" /></svg>
      </button>
      <button aria-label="Search" className="flex w-[52px] items-center justify-center">
        <svg viewBox="0 0 22 22" className="size-[22px]" fill="none" stroke="#fff"><circle cx="10" cy="10" r="8.500" strokeWidth="2" /><path d="M16 16l4 4" strokeWidth="2" /><path d="M10 6a4 4 0 1 0 4 4" strokeWidth="1.500" /><circle cx="11" cy="9" r="1" fill="#fff" /></svg>
      </button>
      <button aria-label="File Explorer" className="flex w-[55px] items-center justify-center">
        <svg viewBox="0 0 22 20" className="h-5 w-[22px]"><path d="M0 1h8l2 2h11v15H0z" fill="#e8a829" /><path d="M0 5h22v13H0z" fill="#ffd667" /><path d="M4 19v-6q0-2 2-2h10q2 0 2 2v6h-4v-4H8v4z" fill="#3b8ede" /></svg>
      </button>
      <div className="flex gap-[9px]">
        {tasks.map((t, i) => (
          <button key={i} className={clsx("flex w-[120px] items-center gap-1 border-b-2 border-[#76b9ed] pt-0.5 pl-[5px] whitespace-nowrap", t.active && "bg-[#48565a]")}>
            <span className="flex w-6 shrink-0 justify-center">{t.icon}</span>
            <span>{t.title}</span>
          </button>
        ))}
      </div>
      <div className="ml-auto flex items-center">
        <div className="flex items-center gap-[9px]">
          <svg viewBox="0 0 12 12" className="size-3" fill="none" stroke="#fff"><path d="M1 9l5-6 5 6" /></svg>
          <svg viewBox="0 0 16 14" className="h-3.5 w-4"><path d="M10 0L0 13l8-4z" fill="#f01818" /><path d="M10 6l5 8-6-4z" fill="#20c040" /></svg>
          <svg viewBox="0 0 16 16" className="size-4" fill="none" stroke="#fff"><path d="M1 6h2l4-4v12l-4-4H1zM9 5.500q2 2.500 0 5M11 4q3 4 0 8" /><path d="M13 2.500q4 5.500 0 11" stroke="#8a9698" /></svg>
          <svg viewBox="0 0 14 14" className="size-3.5"><rect width="14" height="14" rx="3" fill="#1f8af0" /><path d="M4 2l5 4 1 6-4-4z" fill="#fff" /></svg>
          <span className="text-base">英</span>
        </div>
        <span className="mr-4 ml-3.5 flex size-[15px] items-center justify-center bg-white text-[13px] leading-none text-black">拼</span>
        <span className="flex size-[22px] items-center justify-center rounded-full border-2 border-[#10c868]">31</span>
        <div className="w-[82px] text-center leading-[19px]">
          <div>17:44</div>
          <div>2024/3/5</div>
        </div>
        <button aria-label="Player" className="flex w-7 justify-center">
          <svg viewBox="0 0 16 16" className="size-4" fill="none" stroke="#fff"><path d="M.5 2.500h15v12H.5z" /><path d="M6 5.500v6l4-3z" fill="#fff" /></svg>
        </button>
        <button aria-label="Notifications" className="flex w-[54px] justify-center">
          <svg viewBox="0 0 16 16" className="size-4" fill="none" stroke="#fff"><path d="M.5 1.500h15v11h-5L8 15l-2.500-2.500h-5z" /></svg>
        </button>
        <span className="mr-1 h-10 w-px bg-[#5c6a6e]" />
      </div>
    </div>
  );
}

export default function App() {
  return (
    <div className="relative flex h-screen flex-col overflow-hidden bg-black text-black">
      <TitleBar />
      <MenuBar />
      <div className="flex min-h-0 flex-1">
        <LayerPanel />
        <BoardCanvas />
        <ToolPanel />
      </div>
      <StatusBars />
      <HistogramWindow />
      <ResultsWindow />
      <Taskbar />
    </div>
  );
}
